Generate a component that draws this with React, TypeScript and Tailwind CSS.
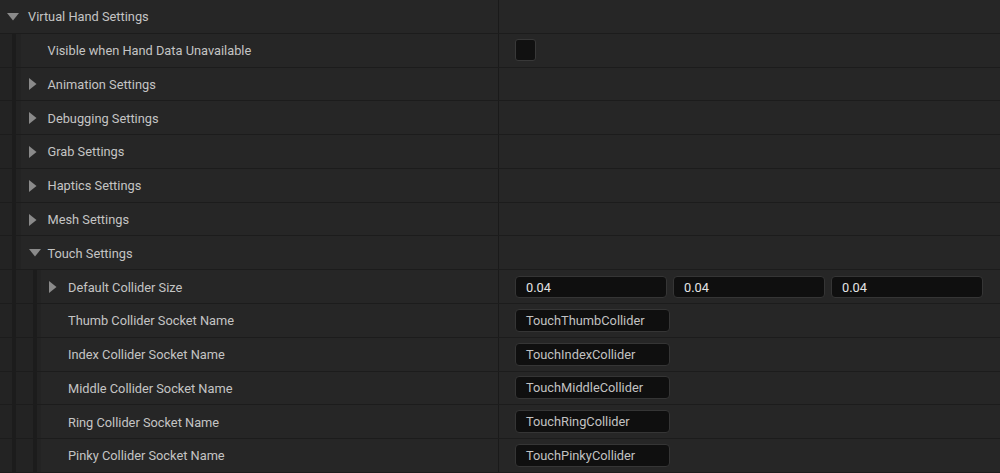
import React from "react";

type Row = {
  label: string;
  level: number;
  arrow?: "down" | "right";
  value?: React.ReactNode;
};

function Arrow({ dir }: { dir: "down" | "right" }) {
  if (dir === "down") {
    return (
      <svg width="12" height="8" viewBox="0 0 12 8" className="shrink-0">
        <polygon points="0,0 12,0 6,7.5" fill="#8a8a8a" />
      </svg>
    );
  }
  return (
    <svg width="8" height="12" viewBox="0 0 8 12" className="shrink-0">
      <polygon points="0,0 7.5,6 0,12" fill="#8a8a8a" />
    </svg>
  );
}

function Gutter() {
  return (
    <div className="flex h-full w-[20.5px] shrink-0 bg-[#232323]">
      <div className="w-[12px]" />
      <div className="w-[4px] bg-[#1c1c1c]" />
      <div className="flex-1" />
    </div>
  );
}

function NumBox({ v }: { v: string }) {
  return (
    <div className="flex h-[22px] w-[152px] items-center rounded-[4px] border border-[#353535] bg-[#0f0f0f] pl-[10px] pt-[1px] text-[12.8px] text-[#e4e4e4]">
      {v}
    </div>
  );
}

function TextBox({ v }: { v: string }) {
  return (
    <div className="flex h-[23px] w-[155px] items-center rounded-[4px] border border-[#353535] bg-[#0f0f0f] pl-[10px] text-[12.8px] text-[#c2c2c2]">
      {v}
    </div>
  );
}

const rows: Row[] = [
  { label: "Virtual Hand Settings", level: 0, arrow: "down" },
  {
    label: "Visible when Hand Data Unavailable",
    level: 1,
    value: (
      <div className="h-[22px] w-[21px] rounded-[3px] border border-[#383838] bg-[#111111]" />
    ),
  },
  { label: "Animation Settings", level: 1, arrow: "right" },
  { label: "Debugging Settings", level: 1, arrow: "right" },
  { label: "Grab Settings", level: 1, arrow: "right" },
  { label: "Haptics Settings", level: 1, arrow: "right" },
  { label: "Mesh Settings", level: 1, arrow: "right" },
  { label: "Touch Settings", level: 1, arrow: "down" },
  {
    label: "Default Collider Size",
    level: 2,
    arrow: "right",
    value: (
      <div className="flex gap-[6px]">
        <NumBox v="0.04" />
        <NumBox v="0.04" />
        <NumBox v="0.04" />
      </div>
    ),
  },
  { label: "Thumb Collider Socket Name", level: 2, value: <TextBox v="TouchThumbCollider" /> },
  { label: "Index Collider Socket Name", level: 2, value: <TextBox v="TouchIndexCollider" /> },
  { label: "Middle Collider Socket Name", level: 2, value: <TextBox v="TouchMiddleCollider" /> },
  { label: "Ring Collider Socket Name", level: 2, value: <TextBox v="TouchRingCollider" /> },
  { label: "Pinky Collider Socket Name", level: 2, value: <TextBox v="TouchPinkyCollider" /> },
];

export default function App() {
  return (
    <div
      className="flex h-[473px] w-[1000px] flex-col overflow-hidden bg-[#1c1c1c]"
      style={{ fontFamily: "Roboto, 'Noto Sans', sans-serif" }}
    >
      {rows.map((r, i) => (
        <div
          key={i}
          className="flex h-[33.79px] shrink-0 border-b border-[#1c1c1c]"
        >
          <div className="flex w-[498px] shrink-0 items-stretch">
            {Array.from({ length: r.level }).map((_, k) => (
              <Gutter key={k} />
            ))}
            <div
              className={`flex flex-1 items-center bg-[#262626] pt-[1px] ${
                r.level === 0 ? "pl-[7px]" : "pl-[8px]"
              }`}
            >
              <div className={`flex items-center ${r.level === 0 ? "w-[21px]" : "w-[19px]"}`}>
                {r.arrow && <Arrow dir={r.arrow} />}
              </div>
              <span className="text-[12.8px] text-[#c4c4c4]">{r.label}</span>
            </div>
          </div>
          <div className="w-[1px] shrink-0 bg-[#1a1a1a]" />
          <div className="flex flex-1 items-center bg-[#262626] pl-[16px]">{r.value}</div>
        </div>
      ))}
    </div>
  );
}
